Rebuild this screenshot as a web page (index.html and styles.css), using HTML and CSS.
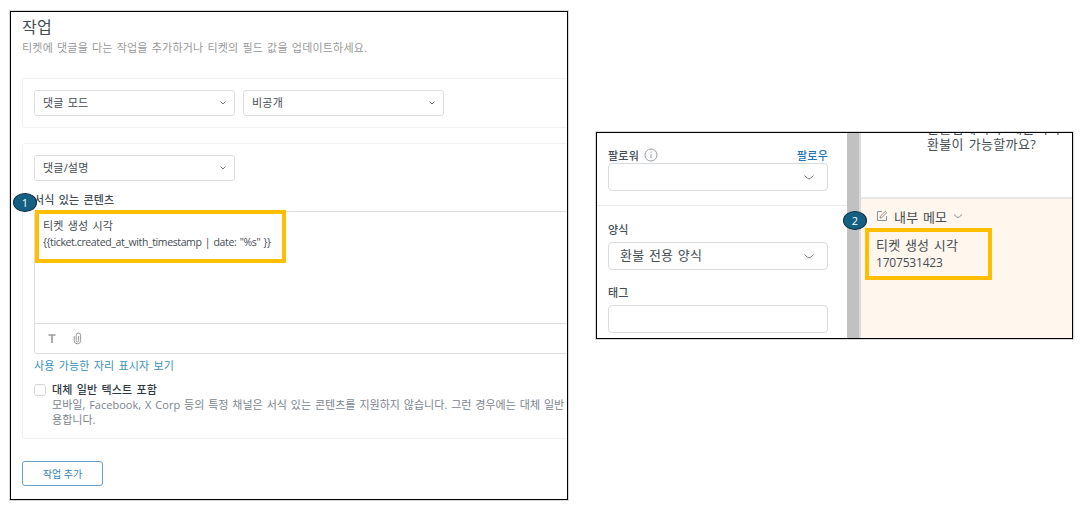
FILE: index.html
```html
<!DOCTYPE html>
<html lang="ko">
<head>
  <meta charset="UTF-8">
  <meta name="viewport" content="width=device-width, initial-scale=1.0">
  <title>작업</title>
  <link rel="stylesheet" href="styles.css">
</head>
<body>
  <!-- Trigger actions -->
  <div class="panel actions">
    <h1>작업</h1>
    <p class="intro">티켓에 댓글을 다는 작업을 추가하거나 티켓의 필드 값을 업데이트하세요.</p>

    <div class="card mode-card">
      <div class="select">
        <span>댓글 모드</span>
        <svg width="8" height="6" viewBox="0 0 8 6"><path d="M1.5 1.5L4 4l2.5-2.5"/></svg>
      </div>
      <div class="select">
        <span>비공개</span>
        <svg width="8" height="6" viewBox="0 0 8 6"><path d="M1.5 1.5L4 4l2.5-2.5"/></svg>
      </div>
    </div>

    <div class="card content-card">
      <div class="select">
        <span>댓글/설명</span>
        <svg width="8" height="6" viewBox="0 0 8 6"><path d="M1.5 1.5L4 4l2.5-2.5"/></svg>
      </div>
      <div class="field-label">서식 있는 콘텐츠</div>
      <div class="editor">
        <div class="editor-text">
          <p>티켓 생성 시각</p>
          <p class="code">{{ticket.created_at_with_timestamp | date: "%s" }}</p>
        </div>
        <div class="toolbar">
          <svg width="8" height="9" viewBox="0 0 8 9"><path d="M0.5 1h7M4 1v8" stroke-width="1.6"/></svg>
          <svg width="9" height="13" viewBox="0 0 9 13"><path d="M1.2 4v4.6a3.2 3.2 0 0 0 6.4 0V3.2a2.2 2.2 0 0 0-4.4 0v5.4a1.2 1.2 0 0 0 2.4 0V4"/></svg>
        </div>
      </div>
      <a class="placeholder-link" href="#">사용 가능한 자리 표시자 보기</a>
      <div class="option">
        <span class="checkbox"></span>
        <div>
          <p class="option-title">대체 일반 텍스트 포함</p>
          <p class="option-hint">모바일, Facebook, X Corp 등의 특정 채널은 서식 있는 콘텐츠를 지원하지 않습니다. 그런 경우에는 대체 일반<br>용합니다.</p>
        </div>
      </div>
    </div>

    <button class="add-button">작업 추가</button>
  </div>

  <!-- Ticket view -->
  <div class="panel ticket">
    <div class="sidebar">
      <div class="followers">
        <div class="row-label">
          <span>팔로워</span>
          <svg class="info" width="14" height="14" viewBox="0 0 14 14"><circle cx="7" cy="7" r="6"/><path d="M7 6v4.5M7 3.5v1.2"/></svg>
          <a href="#">팔로우</a>
        </div>
        <div class="input">
          <svg width="12" height="7" viewBox="0 0 12 7"><path d="M1.5 1.5Q5 5 6 5t4.5-3.5"/></svg>
        </div>
      </div>
      <div class="fields">
        <div class="row-label">양식</div>
        <div class="input">
          <span>환불 전용 양식</span>
          <svg width="12" height="7" viewBox="0 0 12 7"><path d="M1.5 1.5Q5 5 6 5t4.5-3.5"/></svg>
        </div>
        <div class="row-label tag-label">태그</div>
        <div class="input"></div>
      </div>
    </div>
    <div class="splitter"></div>
    <div class="conversation">
      <div class="message">
        <p>환불접에 구구 해본 구구</p>
        <p>환불이 가능할까요?</p>
      </div>
      <div class="memo">
        <div class="memo-head">
          <svg width="12" height="12" viewBox="0 0 12 12"><path d="M6 1.5H1.5v9h9V6M4 8l.4-1.8L9.3 1.3l1.4 1.4-4.9 4.9z"/></svg>
          <span>내부 메모</span>
          <svg width="10" height="6" viewBox="0 0 10 6"><path d="M1 1.5Q4 4.5 5 4.5T9 1.5"/></svg>
        </div>
        <p>티켓 생성 시각</p>
        <p class="timestamp">1707531423</p>
      </div>
    </div>
  </div>

  <!-- Callouts over both panels -->
  <div class="highlight highlight-one"></div>
  <div class="badge badge-one">1</div>
  <div class="highlight highlight-two"></div>
  <div class="badge badge-two">2</div>
</body>
</html>
```

FILE: styles.css
```css
* {
  box-sizing: border-box;
}
body {
  position: relative;
  display: flex;
  align-items: flex-start;
  gap: 28px;
  width: 1080px;
  height: 512px;
  margin: 0;
  padding: 11px 0 0 10px;
  overflow: hidden;
  background-color: #fff;
  color: #444c54;
  font-family: "Open Sans", "Noto Sans CJK KR", sans-serif;
  font-size: 11px;
  letter-spacing: 0.2px;
  word-spacing: 1px;
}
h1, p {
  margin: 0;
  white-space: nowrap;
}
span {
  white-space: nowrap;
}
a {
  text-decoration: none;
}
svg {
  flex: none;
  fill: none;
  stroke: #737b82;
}
.panel {
  flex: none;
  border: 1px solid #000;
  box-shadow: 0 0 0 1px #d8d8d8;
  overflow: hidden;
}

/* Trigger actions */
.actions {
  width: 558px;
  height: 489px;
  padding: 4px 0 0 11px;
}
.actions h1 {
  height: 23px;
  line-height: 23px;
  font-size: 16px;
  font-weight: 400;
}
.intro {
  height: 18px;
  line-height: 18px;
  color: #999;
}
.card {
  width: 600px;
  border: 1px solid #f0f0f0;
  border-radius: 3px;
}
.mode-card {
  display: flex;
  gap: 8px;
  height: 50px;
  margin-top: 21px;
  padding: 11px;
}
.select {
  display: flex;
  align-items: center;
  justify-content: space-between;
  width: 201px;
  height: 26px;
  padding: 0 7px 0 8px;
  border: 1px solid #dedede;
  border-radius: 3px;
  line-height: 18px;
}
.content-card {
  height: 296px;
  margin-top: 15px;
  padding: 11px;
}
.field-label {
  height: 30px;
  padding-top: 10px;
  line-height: 18px;
  font-weight: 500;
}
.editor {
  height: 143px;
  border: 1px solid #dedede;
  border-radius: 3px;
}
.editor-text {
  height: 111px;
  padding: 6px 8px;
  line-height: 16px;
}
.code {
  font-size: 10.5px;
  letter-spacing: -0.38px;
}
.toolbar {
  display: flex;
  align-items: center;
  gap: 17px;
  height: 30px;
  padding-left: 13px;
  border-top: 1px solid #dedede;
}
.toolbar svg {
  stroke: #999;
}
.placeholder-link {
  display: block;
  height: 24px;
  line-height: 24px;
  color: #3a91b8;
}
.option {
  display: flex;
  gap: 6px;
  padding-top: 3px;
}
.checkbox {
  width: 12px;
  height: 12px;
  margin-top: 3px;
  border: 1px solid #d4d4d4;
  border-radius: 3px;
}
.option-title {
  height: 16px;
  line-height: 18px;
  color: #2f3941;
  font-weight: 500;
}
.option-hint {
  line-height: 15px;
  letter-spacing: 0.02px;
  color: #7b848d;
}
.add-button {
  display: block;
  width: 81px;
  height: 25px;
  margin-top: 22px;
  padding: 0;
  border: 1px solid #6a9fcb;
  border-radius: 3px;
  background-color: #fff;
  color: #337fbd;
  font-family: inherit;
  font-size: 10px;
}

/* Ticket view */
.ticket {
  display: flex;
  width: 477px;
  height: 207px;
  margin-top: 121px;
}
.sidebar {
  width: 250px;
}
.followers {
  height: 73px;
  padding: 13px 19px 0 11px;
  border-bottom: 1px solid #ebebeb;
}
.fields {
  padding: 14px 19px 0 11px;
}
.row-label {
  display: flex;
  align-items: center;
  height: 17px;
  font-weight: 500;
}
.row-label a {
  margin-left: auto;
  color: #1f73b7;
}
.info {
  margin-left: 5px;
  stroke: #9aa0a6;
}
.input {
  display: flex;
  align-items: center;
  height: 28px;
  padding: 0 12px 0 11px;
  border: 1px solid #d8dcde;
  border-radius: 4px;
  font-size: 13px;
  line-height: 16px;
}
.input svg {
  margin-left: auto;
}
.input span {
  padding-bottom: 2px;
}
.fields .input {
  margin-top: 5px;
}
.tag-label {
  margin-top: 13px;
}
.splitter {
  width: 14px;
  background-color: #c1c1c1;
  border-right: 2px solid #d8dcde;
}
.conversation {
  flex: 1;
  font-size: 13px;
}
.message {
  height: 76px;
  margin-top: -13px;
  padding-left: 66px;
  line-height: 16px;
  letter-spacing: 0.35px;
}
.memo {
  height: 160px;
  margin-top: 1px;
  padding: 8px 0 0 15px;
  border-top: 2px solid #e4e6e8;
  background-color: #fff6ed;
}
.memo-head {
  display: flex;
  align-items: center;
  gap: 6px;
  height: 18px;
  margin-bottom: 12px;
}
.memo-head svg {
  stroke: #8d8f90;
}
.memo p {
  height: 17px;
  line-height: 17px;
}
.memo .timestamp {
  font-size: 12px;
  letter-spacing: -0.2px;
}

/* Callouts */
.highlight {
  position: absolute;
  border: 4px solid #ffbf00;
}
.highlight-one {
  left: 35px;
  top: 210px;
  width: 251px;
  height: 53px;
}
.highlight-two {
  left: 865px;
  top: 228px;
  width: 127px;
  height: 52px;
}
.badge {
  position: absolute;
  width: 24px;
  height: 19px;
  border: 1px solid #0b3045;
  border-radius: 50%;
  background-color: #156082;
  color: #fff;
  font-size: 11px;
  line-height: 18px;
  text-align: center;
}
.badge-one {
  left: 13px;
  top: 193px;
}
.badge-two {
  left: 843px;
  top: 211px;
}
```
